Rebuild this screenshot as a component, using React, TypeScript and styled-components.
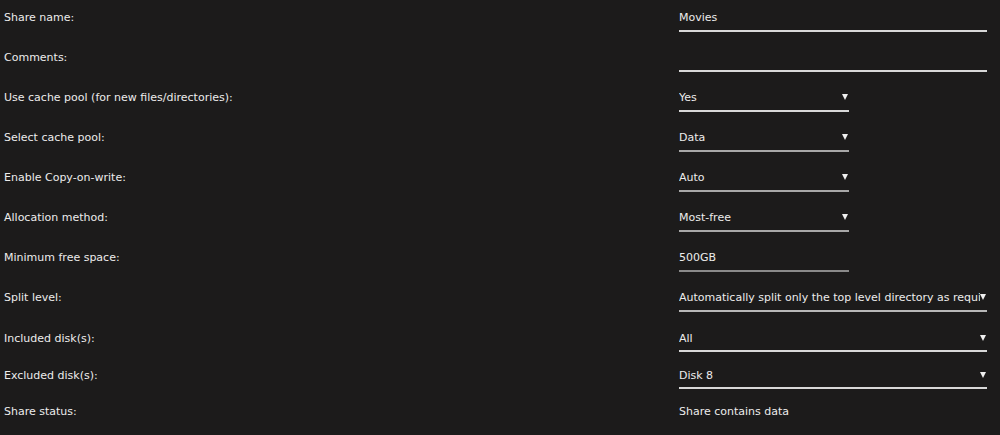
import styled, { createGlobalStyle } from 'styled-components';

const GlobalStyle = createGlobalStyle`
  html, body {
    margin: 0;
    padding: 0;
    background: #1c1b1b;
  }
  body {
    font-family: 'DejaVu Sans', 'Open Sans', sans-serif;
    font-size: 11px;
    color: #ececec;
  }
`;

const Form = styled.div`
  width: 1000px;
  height: 435px;
  background: #1c1b1b;
`;

const Row = styled.div<{ $height: number }>`
  display: grid;
  grid-template-columns: 679px 1fr;
  height: ${(p) => p.$height}px;
  align-items: start;
`;

const Label = styled.div<{ $top: number }>`
  padding: ${(p) => p.$top}px 0 0 4px;
  line-height: 20px;
`;

const Field = styled.div<{ $wide?: boolean; $top: number; $bottom: number; $line?: string }>`
  display: flex;
  align-items: center;
  box-sizing: border-box;
  width: ${(p) => (p.$wide ? 308 : 170)}px;
  padding-top: ${(p) => p.$top}px;
  padding-bottom: ${(p) => p.$bottom}px;
  line-height: 20px;
  border-bottom: 2px solid ${(p) => p.$line || '#d8d8d8'};
`;

const Value = styled.span`
  flex: 1;
  min-height: 20px;
  overflow: hidden;
  white-space: nowrap;
`;

const Arrow = styled.span`
  flex: none;
  width: 0;
  height: 0;
  margin: 0 1px 2px 0;
  border-left: 3px solid transparent;
  border-right: 3px solid transparent;
  border-top: 6px solid #f0f0f0;
`;

const Plain = styled.div<{ $top: number }>`
  padding-top: ${(p) => p.$top}px;
  line-height: 20px;
`;

type Item = {
  label: string;
  value: string;
  kind: 'text' | 'select' | 'plain';
  wide?: boolean;
  line?: string;
  height: number;
  top: number;
  bottom: number;
};

const items: Item[] = [
  { label: 'Share name:', value: 'Movies', kind: 'text', wide: true, height: 40, top: 8, bottom: 2 },
  { label: 'Comments:', value: '', kind: 'text', wide: true, height: 40, top: 8, bottom: 2 },
  { label: 'Use cache pool (for new files/directories):', value: 'Yes', kind: 'select', height: 40, top: 8, bottom: 2 },
  { label: 'Select cache pool:', value: 'Data', kind: 'select', line: '#a8a8a8', height: 40, top: 8, bottom: 2 },
  { label: 'Enable Copy-on-write:', value: 'Auto', kind: 'select', line: '#a8a8a8', height: 40, top: 8, bottom: 2 },
  { label: 'Allocation method:', value: 'Most-free', kind: 'select', line: '#a8a8a8', height: 40, top: 8, bottom: 2 },
  { label: 'Minimum free space:', value: '500GB', kind: 'text', line: '#8a8a8a', height: 40, top: 8, bottom: 2 },
  {
    label: 'Split level:',
    value: 'Automatically split only the top level directory as required',
    kind: 'select',
    wide: true,
    line: '#b8b8b8',
    height: 40,
    top: 8,
    bottom: 2,
  },
  { label: 'Included disk(s):', value: 'All', kind: 'select', wide: true, height: 37, top: 9, bottom: 1 },
  { label: 'Excluded disk(s):', value: 'Disk 8', kind: 'select', wide: true, height: 36, top: 9, bottom: 1 },
  { label: 'Share status:', value: 'Share contains data', kind: 'plain', height: 40, top: 9, bottom: 0 },
];

export default function App() {
  return (
    <>
      <GlobalStyle />
      <Form>
        {items.map((it) => (
          <Row key={it.label} $height={it.height}>
            <Label $top={it.top}>{it.label}</Label>
            {it.kind === 'plain' ? (
              <Plain $top={it.top}>{it.value}</Plain>
            ) : (
              <Field $wide={it.wide} $top={it.top} $bottom={it.bottom} $line={it.line}>
                <Value>{it.value}</Value>
                {it.kind === 'select' && <Arrow />}
              </Field>
            )}
          </Row>
        ))}
      </Form>
    </>
  );
}
